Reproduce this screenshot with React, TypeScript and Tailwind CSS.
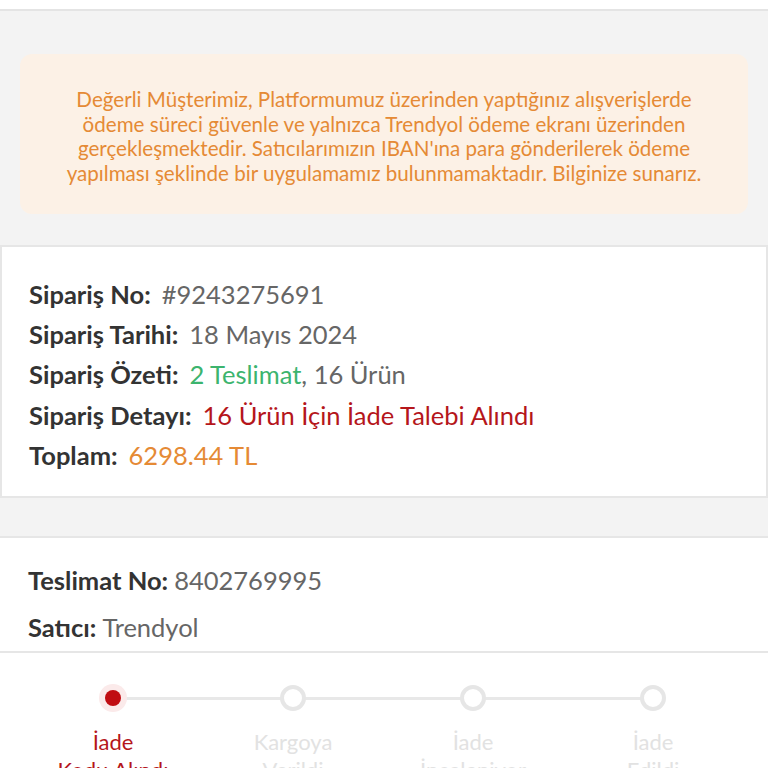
const steps = [
  { title: 'İade', sub: 'Kodu Alındı', active: true },
  { title: 'Kargoya', sub: 'Verildi', active: false },
  { title: 'İade', sub: 'İnceleniyor', active: false },
  { title: 'İade', sub: 'Edildi', active: false },
]

function Row({ label, children }: { label: string; children: React.ReactNode }) {
  return (
    <div className="flex items-baseline gap-[11px] text-[25.5px] leading-[40.3px]">
      <span className="font-bold text-[#333]">{label}</span>
      <span className="text-[#666]">{children}</span>
    </div>
  )
}

export default function App() {
  return (
    <div className="min-h-[768px] bg-[#f3f3f3] font-['Lato','Open_Sans',sans-serif]">
      <div className="h-[11px] bg-white border-b-2 border-[#e4e4e4]" />

      <div className="px-[20px] pt-[43px] pb-[31px]">
        <div className="rounded-[12px] bg-[#fcf1e6] px-[10px] pt-[33px] pb-[28px] text-center text-[20.6px] leading-[24.7px] text-[#e58a35]">
          Değerli Müşterimiz, Platformumuz üzerinden yaptığınız alışverişlerde
          <br />
          ödeme süreci güvenle ve yalnızca Trendyol ödeme ekranı üzerinden
          <br />
          gerçekleşmektedir. Satıcılarımızın IBAN'ına para gönderilerek ödeme
          <br />
          yapılması şeklinde bir uygulamamız bulunmamaktadır. Bilginize sunarız.
        </div>
      </div>

      <div className="bg-white border-2 border-[#e6e6e6] px-[27px] pt-[27px] pb-[21px]">
        <Row label="Sipariş No:">#9243275691</Row>
        <Row label="Sipariş Tarihi:">18 Mayıs 2024</Row>
        <Row label="Sipariş Özeti:">
          <span className="text-[#3cb46e]">2 Teslimat</span>, 16 Ürün
        </Row>
        <Row label="Sipariş Detayı:">
          <span className="text-[#b5161b]">16 Ürün İçin İade Talebi Alındı</span>
        </Row>
        <Row label="Toplam:">
          <span className="text-[#e58a35]">6298.44 TL</span>
        </Row>
      </div>

      <div className="mt-[38px] bg-white border-t-2 border-[#e6e6e6]">
        <div className="px-[28px] pt-[19px]">
          <div className="flex items-baseline gap-[6px] text-[25.5px] leading-[47px]">
            <span className="font-bold text-[#333]">Teslimat No:</span>
            <span className="text-[#666]">8402769995</span>
          </div>
          <div className="flex items-baseline gap-[6px] text-[25.5px] leading-[47px]">
            <span className="font-bold text-[#333]">Satıcı:</span>
            <span className="text-[#666]">Trendyol</span>
          </div>
        </div>
        <div className="border-t-2 border-[#e6e6e6] px-[23px] pt-[30px] pb-[10px]">
          <div className="grid grid-cols-4 w-[720px]">
            {steps.map((s, i) => (
              <div key={i} className="relative flex flex-col items-center">
                {i < steps.length - 1 && (
                  <div className="absolute top-[14px] left-1/2 w-full h-[3px] bg-[#e8e8e8]" />
                )}
                <div className="relative z-10 h-[30px] w-[30px] flex items-center justify-center">
                  {s.active ? (
                    <div className="h-[28px] w-[28px] rounded-full bg-[#fbeaea] flex items-center justify-center">
                      <div className="h-[16px] w-[16px] rounded-full bg-[#c00d12]" />
                    </div>
                  ) : (
                    <div className="h-[26px] w-[26px] rounded-full border-[4px] border-[#e6e6e6] bg-white" />
                  )}
                </div>
                <div
                  className={
                    s.active
                      ? 'mt-[15px] text-center text-[22px] leading-[28px] text-[#b5161b]'
                      : 'mt-[15px] text-center text-[22px] leading-[28px] text-[#e2e2e2]'
                  }
                >
                  {s.title}
                  <br />
                  {s.sub}
                </div>
              </div>
            ))}
          </div>
        </div>
      </div>
    </div>
  )
}
